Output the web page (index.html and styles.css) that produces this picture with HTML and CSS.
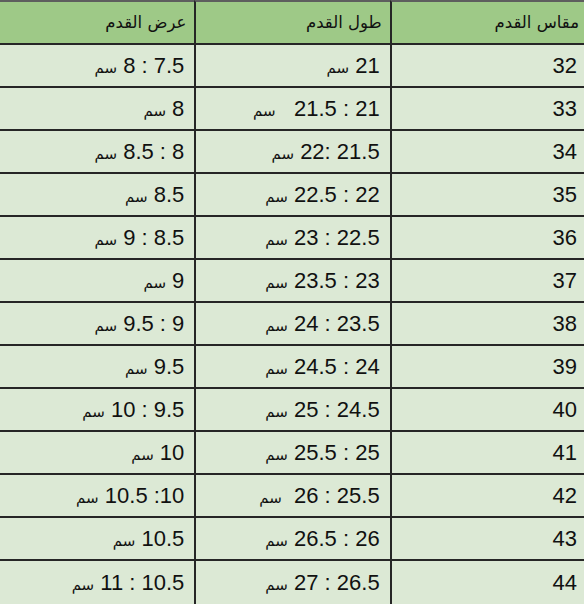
FILE: index.html
```html
<!DOCTYPE html>
<html lang="ar" dir="rtl">
<head>
<meta charset="utf-8">
<title>مقاس القدم</title>
<link rel="stylesheet" href="styles.css">
</head>
<body>
<table class="sizes">
  <thead>
    <tr>
      <th class="c-size"><span class="ar">مقاس القدم</span></th>
      <th class="c-len"><span class="ar">طول القدم</span></th>
      <th class="c-wid"><span class="ar">عرض القدم</span></th>
    </tr>
  </thead>
  <tbody>
    <tr><td class="c-size">32</td><td class="c-len">21 <span class="ar">سم</span></td><td class="c-wid">7.5 : 8 <span class="ar">سم</span></td></tr>
    <tr><td class="c-size">33</td><td class="c-len">21 : 21.5 &nbsp; <span class="ar">سم</span></td><td class="c-wid">8 <span class="ar">سم</span></td></tr>
    <tr><td class="c-size">34</td><td class="c-len">21.5 :22 <span class="ar">سم</span></td><td class="c-wid">8 : 8.5 <span class="ar">سم</span></td></tr>
    <tr><td class="c-size">35</td><td class="c-len">22 : 22.5 <span class="ar">سم</span></td><td class="c-wid">8.5 <span class="ar">سم</span></td></tr>
    <tr><td class="c-size">36</td><td class="c-len">22.5 : 23 <span class="ar">سم</span></td><td class="c-wid">8.5 : 9 <span class="ar">سم</span></td></tr>
    <tr><td class="c-size">37</td><td class="c-len">23 : 23.5 <span class="ar">سم</span></td><td class="c-wid">9 <span class="ar">سم</span></td></tr>
    <tr><td class="c-size">38</td><td class="c-len">23.5 : 24 <span class="ar">سم</span></td><td class="c-wid">9 : 9.5 <span class="ar">سم</span></td></tr>
    <tr><td class="c-size">39</td><td class="c-len">24 : 24.5 <span class="ar">سم</span></td><td class="c-wid">9.5 <span class="ar">سم</span></td></tr>
    <tr><td class="c-size">40</td><td class="c-len">24.5 : 25 <span class="ar">سم</span></td><td class="c-wid">9.5 : 10 <span class="ar">سم</span></td></tr>
    <tr><td class="c-size">41</td><td class="c-len">25 : 25.5 <span class="ar">سم</span></td><td class="c-wid">10 <span class="ar">سم</span></td></tr>
    <tr><td class="c-size">42</td><td class="c-len">25.5 : 26 &nbsp;<span class="ar">سم</span></td><td class="c-wid">10: 10.5 <span class="ar">سم</span></td></tr>
    <tr><td class="c-size">43</td><td class="c-len">26 : 26.5 <span class="ar">سم</span></td><td class="c-wid">10.5 <span class="ar">سم</span></td></tr>
    <tr><td class="c-size">44</td><td class="c-len">26.5 : 27 <span class="ar">سم</span></td><td class="c-wid">10.5 : 11 <span class="ar">سم</span></td></tr>
  </tbody>
</table>
</body>
</html>
```

FILE: styles.css
```css
html, body {
  margin: 0;
  padding: 0;
  background: #dce9d5;
}

.sizes {
  width: 584px;
  border-collapse: separate;
  border-spacing: 0;
  table-layout: fixed;
  font-family: "Liberation Sans", Arial, sans-serif;
  color: #111;
}

.sizes th,
.sizes td {
  height: 41px;
  padding: 0 10px 0 4px;
  text-align: right;
  vertical-align: middle;
  border-bottom: 2px solid #262626;
  white-space: pre;
  box-sizing: content-box;
}

.sizes th {
  background: #9ec987;
  border-top: 2px solid #5e5e5e;
  height: 41px;
  font-weight: normal;
  padding-right: 8px;
}

.sizes td {
  background: #dce9d5;
  font-size: 22px;
}

.sizes tbody tr:last-child td {
  border-bottom: none;
  height: 43px;
}

.sizes .c-size {
  width: 181px;
  padding-right: 7px;
  border-left: 2px solid #262626;
}

.sizes th.c-size {
  padding-right: 5px;
}

.sizes .c-len {
  width: 179px;
  border-left: 2px solid #262626;
}

.sizes .c-wid {
  width: 180px;
}

.sizes th .ar {
  font-family: "DejaVu Sans", sans-serif;
  font-size: 16.5px;
}

.sizes td .ar {
  font-family: "DejaVu Sans", sans-serif;
  font-size: 15px;
}
```
